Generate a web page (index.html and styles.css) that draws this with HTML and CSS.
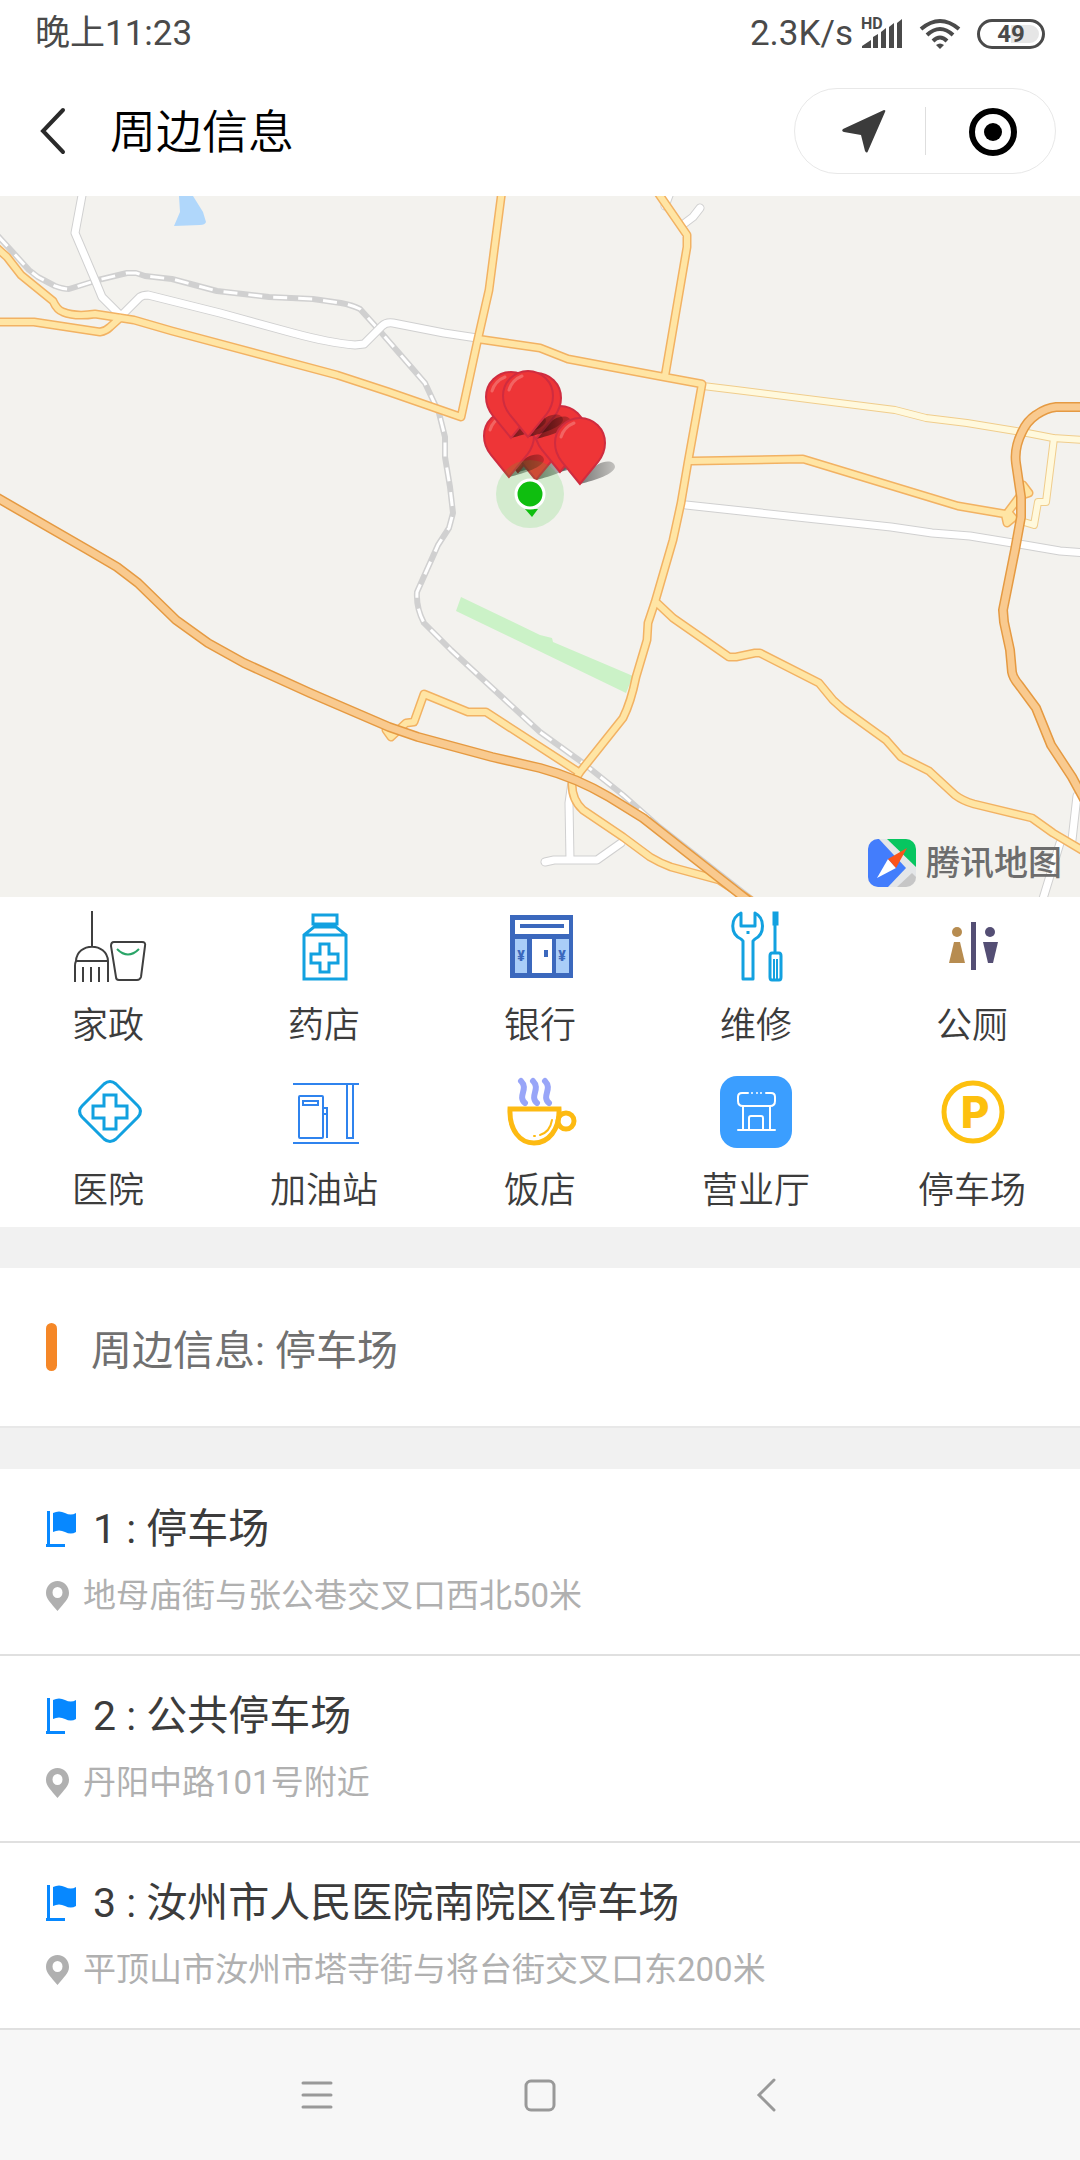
FILE: index.html
```html
<!DOCTYPE html>
<html lang="zh-CN">
  <head>
    <meta charset="utf-8">
    <meta name="viewport" content="width=device-width, initial-scale=1">
    <title>周边信息</title>
    <link rel="stylesheet" href="styles.css">
  </head>
  <body>
    <div class="status-bar">
      <span>晚上11:23</span>
      <div class="status-right">
        <span class="speed">2.3K/s</span>
        <svg class="signal" viewBox="0 0 42 34" width="42" height="34">
          <text class="hd" x="0" y="12">HD</text>
          <path d="M1 31v-2l9-6v8zM12 31V20l5-3v14zM20 31V15l5-4v20zM28 31V10l5-4v25zM36 31V6l5-4v29z"/>
        </svg>
        <svg class="wifi" viewBox="0 0 42 32" width="42" height="32">
          <path d="M2 11Q21-5 40 11M8 17Q21 5 34 17M14 23Q21 16 28 23"/>
          <path class="wifi-dot" d="M17 27q4-3 8 0l-4 4z"/>
        </svg>
        <div class="battery">49</div>
      </div>
    </div>

    <header class="header">
      <button class="back" aria-label="返回">
        <svg viewBox="0 0 26 48" width="26" height="48"><path d="M23 3L3 24l20 21"/></svg>
      </button>
      <h1>周边信息</h1>
      <div class="capsule">
        <button aria-label="定位">
          <svg viewBox="0 0 48 48" width="48" height="48"><path d="M7 22L48 3q2 0 1 2L32 44q-1 3-3 0L25 28 8 25q-3-1-1-3z" fill="#3b3b3b"/></svg>
        </button>
        <button aria-label="关闭">
          <svg viewBox="0 0 48 48" width="48" height="48">
            <circle cx="26" cy="25" r="21" fill="none" stroke="#000" stroke-width="6"/>
            <circle cx="26" cy="25" r="9"/>
          </svg>
        </button>
      </div>
    </header>

    <div class="map">
      <svg class="map-canvas" viewBox="0 196 1080 701">
        <defs>
          <linearGradient id="shade" x1="0" x2="1">
            <stop offset="0" stop-opacity=".5"/>
            <stop offset="1" stop-opacity=".2"/>
          </linearGradient>
          <g id="pin">
            <path d="M0 0L10-12C17-24 35-26 35-17 34-10 16-4 0 0z" fill="url(#shade)"/>
            <path d="M0 0L-18-22Q-25-31-25-41a25 25 0 0 1 50 0Q25-31 18-22z" fill="#ee3537" stroke="#cf2c3f" stroke-width="2"/>
            <path d="M-19-47q3-10 13-14" fill="none" stroke="#f26462" stroke-width="3" stroke-linecap="round"/>
          </g>
          <path id="white-west" d="M83 190L75 233 95 280 102 297 121 316 140 297Q143 295 148 295L220 313 293 333Q330 343 355 345L364 344 382 326Q386 322 393 323L444 333 477 338"/>
          <path id="white-east" d="M686 505L891 527 932 533 970 536 1019 544 1060 551 1085 553M685 223L693 217 700 208M665 206L671 190"/>
          <path id="white-south" d="M572 782L569 803 570 860M545 862L554 860H597L621 843M1077 796L1072 840M1060 843L1042 902"/>
          <path id="rail" d="M-2 236L29 270 38 277 55 286Q63 289 69 289L98 280 127 273H136L145 276 172 279 217 291 269 297 313 299 341 303Q352 305 360 309L379 330 425 383 439 413 445 437V457L450 487 453 513 449 528 438 545 417 592Q416 608 424 623L451 650 540 732 583 763 623 795 657 825 754 901"/>
          <path id="pale" d="M703 386L736 390 895 410 926 418 967 423 1022 432 1053 438 1085 440M1054 438L1046 502H1038L1034 525 1024 522"/>
          <path id="yellow" d="M-3 248L7 257 21 275 53 301Q57 310 63 312Q75 317 95 314L134 320 172 331 337 375 389 392 461 417 477 343 489 290 502 190M-3 322H34L100 332Q106 331 110 327L120 318M478 339L540 348 568 359 664 377 702 384 688 462 681 503 673 540 655 602 648 623 647 640 636 677Q631 702 623 718L580 772 572 784Q572 800 583 810L623 837 650 857Q660 863 671 867L719 880 750 900M656 190L687 235V247L665 376M692 461L803 459 958 506 1005 514 1007 523 1013 518 1008 512 1020 496 1029 493 1023 485M386 730L391 737 406 723 414 722 424 694 468 712H486L540 747 577 771M656 602L673 618 729 657H736L755 653H760L819 683 833 700 843 709 886 740 901 757 929 771 955 795Q963 801 974 804L1032 818 1053 833 1085 852"/>
          <path id="orange" d="M-4 497L88 550 117 567 138 583 176 620 208 643 244 663 310 693 389 727 418 737 492 757 540 768Q577 778 609 797L643 818 750 902M1085 407H1056Q1046 408 1036 415 1027 421 1022 432 1014 448 1016 463L1021 497V517L1015 550 1003 610 1004 622 1010 650 1012 672Q1013 678 1019 685L1036 708 1051 745 1072 777 1085 801"/>
        </defs>

        <!-- pond and park -->
        <path d="M179 196H193L203 212 206 222Q205 225 200 225L174 226 180 212z" fill="#b0d7fb"/>
        <path d="M461 597L540 635 552 638 553 642 633 676 626 693 568 665 456 611z" fill="#cbf2c7"/>

        <!-- every road is a wide casing with a narrower fill on top -->
        <g class="road">
          <use href="#rail" stroke="#d0d0d0" stroke-width="6"/>
          <use href="#rail" class="rail-dash" stroke="#fff" stroke-width="3"/>
          <g stroke="#d0d0d0" stroke-width="9">
            <use href="#white-west"/><use href="#white-east"/><use href="#white-south"/>
          </g>
          <g stroke="#fff" stroke-width="7">
            <use href="#white-west"/><use href="#white-east"/><use href="#white-south"/>
          </g>
          <use href="#pale" stroke="#f0cd8c" stroke-width="8"/>
          <use href="#pale" stroke="#fff9dd" stroke-width="6"/>
          <use href="#yellow" stroke="#f2b263" stroke-width="9"/>
          <use href="#yellow" stroke="#ffe5a4" stroke-width="6"/>
          <use href="#orange" stroke="#e59a42" stroke-width="10"/>
          <use href="#orange" stroke="#f9ca8f" stroke-width="7"/>
        </g>

        <use href="#pin" x="518" y="472"/>
        <use href="#pin" x="536" y="480"/>
        <use href="#pin" x="560" y="472"/>
        <use href="#pin" x="509" y="477"/>
        <use href="#pin" x="536" y="439"/>
        <use href="#pin" x="511" y="438"/>
        <use href="#pin" x="528" y="437"/>
        <use href="#pin" x="580" y="484"/>

        <!-- current position -->
        <circle cx="530" cy="494" r="34" fill="#2cc62c" opacity=".16"/>
        <path d="M525 509H538L532 517z" fill="#0fbe0f"/>
        <circle cx="530" cy="494" r="14" fill="#0fbe0f" stroke="#fff" stroke-width="3"/>
      </svg>
      <div class="map-brand">
        <svg viewBox="0 0 48 48" width="48" height="48">
          <rect width="48" height="48" rx="10" fill="#e4e6e8"/>
          <path d="M10 0H11L38 29 20 48H10A10 10 0 0 1 0 38V10A10 10 0 0 1 10 0z" fill="#437dfc"/>
          <path d="M19 0H38A10 10 0 0 1 48 10V28z" fill="#07c660"/>
          <path d="M44 34L48 38A10 10 0 0 1 38 48H29z" fill="#c6c6c6"/>
          <path d="M20 20L9 39 28 29z" fill="#fff"/>
          <path d="M39 9L20 20 28 29z" fill="#fb541b"/>
        </svg>
        <span>腾讯地图</span>
      </div>
    </div>

    <nav class="services">
      <button class="service">
        <svg viewBox="0 0 72 72" fill="none" stroke="#3f3f3f" stroke-width="2">
          <path d="M20 0V36M4 50C5 31 35 31 36 50zM4 50Q3 52 3 55V71M36 50V71M11 56V71M19 56V71M27 56V71"/>
          <path d="M42 31H70Q74 31 73 35L69 66Q68 69 65 69H47Q44 69 44 66L39 35Q39 31 42 31z"/>
          <path d="M45 38Q56 49 67 38" stroke="#2aa568"/>
        </svg>
        <span>家政</span>
      </button>
      <button class="service">
        <svg viewBox="0 0 72 72" fill="none" stroke="#12a1e0" stroke-width="3">
          <path d="M25 4H49V13H25zM16 24L26 16H48L58 24V68H16zM16 24H58"/>
          <path d="M32 33H41V43H50V52H41V61H32V52H23V43H32z"/>
        </svg>
        <span>药店</span>
      </button>
      <button class="service">
        <svg viewBox="0 0 72 72">
          <path d="M6 4H69V67H6z" fill="#3b68bd"/>
          <path d="M11 9H65V23H11zM28 28H48V62H28z" fill="#fff"/>
          <path d="M11 28H23V62H11zM52 28H65V62H52z" fill="#a9cdf8"/>
          <path d="M16 13H60V17H16zM40 39H44V46H40z" fill="#3b68bd"/>
          <text class="yen" x="17" y="50">¥</text>
          <text class="yen" x="58" y="50">¥</text>
        </svg>
        <span>银行</span>
      </button>
      <button class="service">
        <svg viewBox="0 0 72 72" fill="none" stroke="#12a1e0" stroke-width="3">
          <path d="M21 2C10 7 10 23 21 28L23 30V68H33V30L35 28C45 23 45 7 35 2V15H21z" stroke-linejoin="round"/>
          <path d="M28 20V23"/>
          <path d="M54 2H57V13H54zM55 14V41"/>
          <path d="M52 42H59Q61 42 61 45V66Q61 69 59 69H52Q50 69 50 66V45Q50 42 52 42z"/>
          <path d="M54 48V68M57 48V68" stroke-width="2"/>
        </svg>
        <span>维修</span>
      </button>
      <button class="service">
        <svg viewBox="0 0 72 72">
          <g fill="#b78c50"><circle cx="21" cy="21" r="5"/><path d="M18 31H24L29 52H13z"/></g>
          <g fill="#544e74"><path d="M35 11H40V59H35z"/><circle cx="54" cy="21" r="5"/><path d="M47 31H62L57 52H52z"/></g>
        </svg>
        <span>公厕</span>
      </button>
      <button class="service">
        <svg viewBox="0 0 72 72" fill="none" stroke="#12a1e0" stroke-width="3">
          <path d="M32 8Q38 3 44 8L66 30Q71 35 66 41L44 63Q38 68 32 63L10 41Q5 35 10 30z"/>
          <path d="M32 19H44V30H55V42H44V53H32V42H21V30H32z"/>
        </svg>
        <span>医院</span>
      </button>
      <button class="service">
        <svg viewBox="0 0 72 72" fill="none" stroke="#2f83ee" stroke-width="2">
          <path d="M5 8H71M5 67H71M59 8V62H65V8M15 25H30V29H15zM34 32H39V38H34M39 38V62"/>
          <rect x="11" y="20" width="24" height="42" rx="1"/>
        </svg>
        <span>加油站</span>
      </button>
      <button class="service">
        <svg viewBox="0 0 72 72" fill="none" stroke-linecap="round">
          <path d="M17 5C25 13 13 20 21 27M29 5C37 13 25 20 33 27M41 5C49 13 37 20 45 27" stroke="#98a5f8" stroke-width="6"/>
          <path d="M6 33H55C56 54 44 67 30 67S5 54 6 33z" stroke="#fdba12" stroke-width="5"/>
          <circle cx="62" cy="45" r="8" stroke="#fdba12" stroke-width="5"/>
          <path d="M48 44Q46 56 36 59M30 60H31" stroke="#fdba12" stroke-width="2"/>
        </svg>
        <span>饭店</span>
      </button>
      <button class="service">
        <svg viewBox="0 0 72 72" fill="none" stroke="#fff" stroke-width="2" stroke-linecap="round">
          <rect width="72" height="72" rx="17" fill="#3b9eff" stroke="none"/>
          <path d="M28 17H22Q18 17 18 21V25Q18 30 23 30H50Q55 30 55 25V21Q55 17 51 17H46M32 17H32M37 17H37M41 17H41"/>
          <path d="M23 31V53M50 31V53M18 54H55M29 53V42Q29 40 31 40H41Q43 40 43 42V53"/>
        </svg>
        <span>营业厅</span>
      </button>
      <button class="service">
        <svg viewBox="0 0 72 72">
          <circle cx="37" cy="36" r="29" fill="none" stroke="#fdc00f" stroke-width="5"/>
          <text class="parking" x="39" y="52">P</text>
        </svg>
        <span>停车场</span>
      </button>
    </nav>

    <h2 class="section-title">周边信息: 停车场</h2>

    <svg class="symbols" width="0" height="0">
      <symbol id="flag" viewBox="0 0 30 36">
        <path d="M1 0H4V33H19V36H0V33H1z"/>
        <path d="M7 2Q13-1 19 2T30 2V21Q25 24 19 21T7 21z"/>
      </symbol>
      <symbol id="place" viewBox="0 0 23 30">
        <path fill-rule="evenodd" d="M11.500 0C18 0 23 5 23 12C23 18 18 22 11.500 30C5 22 0 18 0 12C0 5 5 0 11.500 0zM11.500 6A5 5.500 0 1 0 11.500 17A5 5.500 0 1 0 11.500 6z"/>
      </symbol>
    </svg>

    <ul class="places">
      <li>
        <h3><svg class="flag"><use href="#flag"/></svg>1 : 停车场</h3>
        <p><svg class="place"><use href="#place"/></svg>地母庙街与张公巷交叉口西北50米</p>
      </li>
      <li>
        <h3><svg class="flag"><use href="#flag"/></svg>2 : 公共停车场</h3>
        <p><svg class="place"><use href="#place"/></svg>丹阳中路101号附近</p>
      </li>
      <li>
        <h3><svg class="flag"><use href="#flag"/></svg>3 : 汝州市人民医院南院区停车场</h3>
        <p><svg class="place"><use href="#place"/></svg>平顶山市汝州市塔寺街与将台街交叉口东200米</p>
      </li>
    </ul>

    <div class="system-nav">
      <button aria-label="菜单"><svg viewBox="0 0 36 36"><path d="M5 6H33M5 18H33M5 30H33"/></svg></button>
      <button aria-label="主页"><svg viewBox="0 0 36 36"><rect x="4" y="4" width="28" height="29" rx="5"/></svg></button>
      <button aria-label="返回"><svg viewBox="0 0 36 36"><path d="M28 3L13 18 28 33"/></svg></button>
    </div>
  </body>
</html>
```

FILE: styles.css
```css
* {
  box-sizing: border-box;
}

body {
  margin: 0;
  background-color: #f1f1f1;
  color: #3c3c3c;
  font-family: Roboto, "Noto Sans CJK SC", sans-serif;
  font-weight: 400;
}

h1, h2, h3, p, ul {
  margin: 0;
  padding: 0;
  font-weight: inherit;
}

button {
  margin: 0;
  padding: 0;
  border: none;
  background: none;
  color: inherit;
  font: inherit;
  cursor: pointer;
}

svg {
  display: block;
  overflow: visible;
}

/* Status bar */
.status-bar {
  display: flex;
  justify-content: space-between;
  align-items: center;
  height: 66px;
  padding: 2px 35px 0;
  background-color: white;
  color: #4a4a4a;
  font-size: 35px;
  line-height: 40px;
}

.status-right {
  display: flex;
  align-items: center;
  gap: 16px;
}

.speed {
  margin-right: -8px;
}

.signal {
  fill: #4a4a4a;
}

.hd {
  font-size: 16px;
  font-weight: 700;
}

.wifi {
  fill: none;
  stroke: #4a4a4a;
  stroke-width: 4;
}

.wifi-dot {
  fill: #4a4a4a;
  stroke: none;
}

.battery {
  width: 68px;
  height: 30px;
  border: 3px solid #4a4a4a;
  border-radius: 15px;
  background: linear-gradient(to right, white 50%, #e6e6e6 50%);
  box-shadow: inset 0 0 0 3px white;
  font-size: 24px;
  font-weight: 700;
  line-height: 24px;
  text-align: center;
}

/* Header */
.header {
  display: flex;
  align-items: center;
  height: 130px;
  padding: 0 24px 0 40px;
  background-color: white;
  color: black;
}

.header h1 {
  flex: 1;
  margin-left: 44px;
  padding-top: 2px;
  font-size: 46px;
  font-weight: 350;
  line-height: 60px;
}

.back svg {
  fill: none;
  stroke: #2a2a2a;
  stroke-width: 4;
  stroke-linecap: round;
}

.capsule {
  display: flex;
  align-items: center;
  height: 86px;
  border: 1px solid #e8e8e8;
  border-radius: 43px;
}

.capsule button {
  display: flex;
  justify-content: center;
  width: 130px;
}

.capsule button + button {
  border-left: 1px solid #dedede;
}

/* Map */
.map {
  position: relative;
  background-color: #f3f2ee;
}

.map-canvas {
  width: 100%;
  overflow: hidden;
}

.road {
  fill: none;
  stroke-linejoin: round;
  stroke-linecap: round;
}

.rail-dash {
  stroke-dasharray: 14 11;
  stroke-linecap: butt;
}

.map-brand {
  position: absolute;
  right: 18px;
  bottom: 10px;
  display: flex;
  align-items: center;
  gap: 10px;
  color: #6d6d6d;
  font-size: 34px;
  font-weight: 500;
  line-height: 48px;
}

/* Services */
.services {
  display: grid;
  grid-template-columns: repeat(5, 1fr);
  background-color: white;
}

.service {
  display: flex;
  flex-direction: column;
  align-items: center;
  gap: 18px;
  padding: 14px 0 11px;
  font-size: 36px;
  font-weight: 350;
  line-height: 50px;
}

.service svg {
  width: 72px;
  height: 72px;
}

.yen {
  fill: #3b68bd;
  font-size: 14px;
  font-weight: 900;
  text-anchor: middle;
}

.parking {
  fill: #fdc00f;
  font-family: Inter, sans-serif;
  font-size: 44px;
  font-weight: 800;
  text-anchor: middle;
}

/* Section title */
.section-title {
  display: flex;
  align-items: center;
  gap: 34px;
  height: 160px;
  margin: 41px 0;
  padding: 0 46px;
  border-bottom: 2px solid #e8e8e8;
  background-color: white;
  color: #707070;
  font-size: 41px;
}

.section-title::before {
  content: "";
  width: 11px;
  height: 48px;
  border-radius: 6px;
  background-color: #f58727;
}

/* Places */
.symbols {
  position: absolute;
}

.places {
  list-style: none;
}

.places li {
  padding: 35px 46px 37px;
  border-bottom: 2px solid #e0e0e0;
  background-color: white;
}

.places h3 {
  display: flex;
  align-items: center;
  gap: 17px;
  margin-bottom: 21px;
  font-size: 41px;
  line-height: 50px;
}

.places p {
  display: flex;
  align-items: center;
  gap: 14px;
  color: #b0b0b0;
  font-size: 33px;
  line-height: 42px;
}

.flag {
  width: 30px;
  height: 36px;
  fill: #0788ff;
}

.place {
  width: 23px;
  height: 30px;
  fill: #b0b0b0;
}

/* System navigation */
.system-nav {
  display: flex;
  justify-content: center;
  align-items: center;
  gap: 188px;
  height: 130px;
  background-color: #f7f7f7;
}

.system-nav svg {
  width: 36px;
  height: 36px;
  fill: none;
  stroke: #999;
  stroke-width: 3;
  stroke-linecap: round;
}
```
